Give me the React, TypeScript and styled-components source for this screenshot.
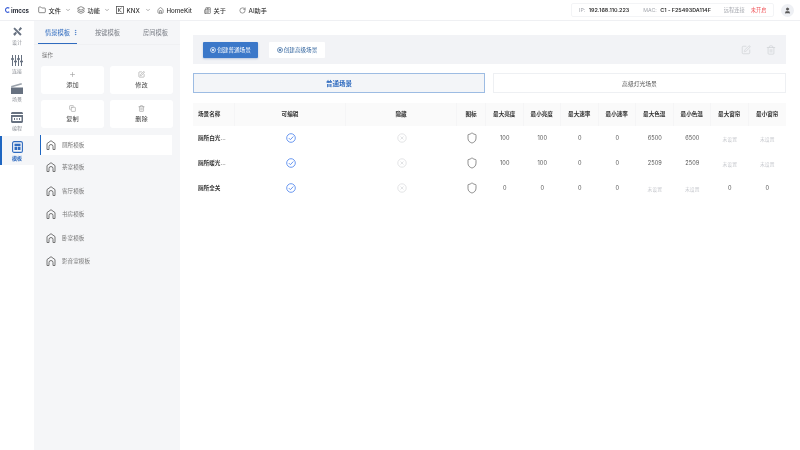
import { FunctionComponent, ReactNode } from "react"
import styled, { createGlobalStyle } from "styled-components"
import {
	ChevronDown, Copy, EllipsisVertical, Folder, Layers, Newspaper, Plus, RotateCw,
	Shield, SquarePen, Trash2, User, Home,
} from "lucide-react"

const GlobalStyle = createGlobalStyle`
	html, body {
		margin: 0;
		padding: 0;
		background: white;
		font-family: "Inter", "Noto Sans CJK SC", sans-serif;
	}
	* { box-sizing: border-box; }
`

const Page = styled.div`
	width: 800px;
	height: 450px;
	display: flex;
	flex-direction: column;
	overflow: hidden;
	will-change: opacity;
`

const Header = styled.header`
	height: 21px;
	flex-shrink: 0;
	display: flex;
	align-items: center;
	padding: 0 6px 0 5px;
	border-bottom: 1px solid #eff0f3;
	color: #333;
	font-size: 6.2px;
`

const Logo = styled.div`
	display: flex;
	align-items: center;
	width: 33px;
	font-weight: 700;
	font-size: 6.2px;
	color: #2a2f3a;
	svg { margin-right: 1px; }
`

const MenuItem = styled.div<{ $width: number }>`
	display: flex;
	align-items: center;
	gap: 2.5px;
	width: ${({ $width }) => $width}px;
	font-weight: 500;
	svg { flex-shrink: 0; color: #555; }
`

const MenuChevron = styled(ChevronDown)`
	margin-left: auto;
	margin-right: 6px;
	color: #666 !important;
`

const Status = styled.div`
	margin-left: auto;
	width: 203px;
	height: 14px;
	display: flex;
	align-items: center;
	padding: 0 7px;
	border: 1px solid #f3f4f6;
	border-radius: 2px;
	font-size: 5.25px;
	white-space: nowrap;
`

const StatusLabel = styled.span<{ $gap?: number }>`
	color: #a3a6ad;
	margin-right: 3.5px;
	margin-left: ${({ $gap }) => $gap || 0}px;
`

const StatusValue = styled.span`
	color: #333;
	font-weight: 600;
	font-size: 5.4px;
`

const StatusOff = styled.span`
	color: #f0555a;
	margin-left: 2.5px;
`

const AvatarCircle = styled.div`
	width: 13px;
	height: 13px;
	margin-left: 7px;
	border-radius: 50%;
	background: #eef0f4;
	color: #555;
	display: flex;
	align-items: center;
	justify-content: center;
`

const Body = styled.div`
	flex: 1;
	display: flex;
	min-height: 0;
`

const Nav = styled.nav`
	width: 34px;
	flex-shrink: 0;
`

const NavItem = styled.div<{ $active?: boolean }>`
	height: 28.8px;
	display: flex;
	flex-direction: column;
	align-items: center;
	justify-content: center;
	gap: 1px;
	font-size: 5px;
	color: ${({ $active }) => ($active ? "#2f6bbf" : "#8b8f96")};
	font-weight: ${({ $active }) => ($active ? 600 : 400)};
	background: ${({ $active }) => ($active ? "#f5f6f8" : "white")};
	border-left: 2px solid ${({ $active }) => ($active ? "#1f66c1" : "transparent")};
	padding-right: 2px;
	svg { color: ${({ $active }) => ($active ? "#2f6bbf" : "#677180")}; }
`

const Side = styled.aside`
	width: 146px;
	flex-shrink: 0;
	background: #f5f6f8;
	display: flex;
	flex-direction: column;
`

const SideTabs = styled.div`
	display: flex;
	height: 24px;
	padding-left: 4px;
	border-bottom: 1px solid #f0f1f3;
`

const SideTab = styled.div<{ $active?: boolean }>`
	width: ${({ $active }) => ($active ? 39 : 48)}px;
	margin-right: ${({ $active }) => ($active ? 4 : 0)}px;
	display: flex;
	align-items: center;
	justify-content: ${({ $active }) => ($active ? "flex-start" : "center")};
	padding-left: ${({ $active }) => ($active ? 7 : 5)}px;
	font-size: 6.25px;
	color: ${({ $active }) => ($active ? "#2f6bbf" : "#7b7f87")};
	border-bottom: ${({ $active }) => ($active ? "1.5px solid #2f6bbf" : "none")};
	svg { margin-left: auto; margin-right: -2px; }
`

const SideLabel = styled.div`
	font-size: 5.5px;
	color: #777;
	padding: 6px 0 0 8px;
	height: 21px;
`

const ActionGrid = styled.div`
	display: grid;
	grid-template-columns: 63px 63px;
	grid-auto-rows: 28px;
	gap: 6px;
	padding-left: 7px;
`

const ActionCard = styled.div`
	background: white;
	border-radius: 3px;
	display: flex;
	flex-direction: column;
	align-items: center;
	justify-content: center;
	gap: 2px;
	font-size: 6.2px;
	color: #444;
	svg { color: #999; }
`

const TemplateList = styled.div`
	margin-top: 7px;
	padding-left: 6px;
	display: flex;
	flex-direction: column;
`

const TemplateItem = styled.div<{ $active?: boolean }>`
	width: 132px;
	height: 23.4px;
	padding-left: 6px;
	display: flex;
	align-items: center;
	gap: 6px;
	font-size: 5.6px;
	color: #777;
	svg { color: #666; }
	${({ $active }) => $active && `
		height: 20px;
		margin-bottom: .7px;
		background: white;
		border-left: 1.5px solid #1f66c1;
		padding-left: 5px;
	`}
`

const Main = styled.main`
	flex: 1;
	padding: 14px 14px 0 13px;
	min-width: 0;
`

const Toolbar = styled.div`
	height: 29px;
	background: #f2f3f6;
	display: flex;
	align-items: center;
	padding: 0 10px;
`

const CreateButton = styled.div<{ $primary?: boolean }>`
	height: 16px;
	width: ${({ $primary }) => ($primary ? 55 : 56)}px;
	margin-right: 11px;
	display: flex;
	align-items: center;
	justify-content: center;
	gap: 1px;
	font-size: 5.6px;
	border-radius: 1px;
	background: ${({ $primary }) => ($primary ? "#3b78c9" : "white")};
	color: ${({ $primary }) => ($primary ? "white" : "#33659f")};
	box-shadow: ${({ $primary }) => ($primary ? "0 1px 2px rgba(50,100,170,.3)" : "none")};
`

const ToolIcons = styled.div`
	margin-left: auto;
	display: flex;
	gap: 15px;
	color: #d4d6da;
`

const SceneTabs = styled.div`
	margin-top: 9px;
	display: grid;
	grid-template-columns: 292px 293px;
	gap: 8px;
`

const SceneTab = styled.div<{ $active?: boolean }>`
	height: 20px;
	display: flex;
	align-items: center;
	justify-content: center;
	font-size: ${({ $active }) => ($active ? 6.5 : 5.8)}px;
	font-weight: ${({ $active }) => ($active ? 600 : 400)};
	color: ${({ $active }) => ($active ? "#2f6bbf" : "#555")};
	background: ${({ $active }) => ($active ? "#f3f5f8" : "white")};
	border: 1px solid ${({ $active }) => ($active ? "#9dbce3" : "#eef0f3")};
`

const Row = styled.div<{ $head?: boolean }>`
	display: grid;
	grid-template-columns: 42px 111px 111px 29px repeat(8, 37.5px);
	height: ${({ $head }) => ($head ? 23 : 25)}px;
	${({ $head }) => $head && "margin-top: 9.5px; background: #fafafa; font-weight: 600;"}
	font-size: 5.6px;
	color: #333;
`

const Cell = styled.div<{ $left?: boolean; $muted?: boolean; $strong?: boolean }>`
	display: flex;
	align-items: center;
	justify-content: ${({ $left }) => ($left ? "flex-start" : "center")};
	padding-left: ${({ $left }) => ($left ? 5 : 0)}px;
	color: ${({ $muted }) => ($muted ? "#c8cacf" : "inherit")};
	font-size: ${({ $muted }) => ($muted ? 4.8 : 5.6)}px;
	font-weight: ${({ $strong }) => ($strong ? 600 : "inherit")};
`

const HeadCell = styled(Cell)`
	border-right: 1px solid #f5f5f6;
	&:last-child { border-right: none; }
`

const ValueCell = styled(Cell)`
	color: ${({ $muted }) => ($muted ? "#c8cacf" : "#555")};
	font-weight: 400;
`

const DesignIcon = () => (
	<svg width="11" height="11" viewBox="0 0 12 12" fill="currentColor">
		<path d="M1.500 3 3 1.500l7.500 7.500L9 10.500z" />
		<path d="M7 4.200 9.200 1.200l1.800 1.500L8.300 5.500z" />
		<path d="M1.200 8.800 4 6.200l1.500 1.500L3 10.800z" />
	</svg>
)

const SlidersIcon = () => (
	<svg width="12" height="11" viewBox="0 0 12 11" fill="none" stroke="currentColor" strokeWidth="1">
		<path d="M1.500 0v11M4.500 0v11M7.500 0v11M10.500 0v11" />
		<path d="M0 4h3M3 6.500h3M6 4h3M9 6.500h3" strokeWidth="1.500" />
	</svg>
)

const SlateIcon = () => (
	<svg width="12" height="11" viewBox="0 0 12 11" fill="currentColor">
		<path d="M0 4.500h12V11H0z" />
		<path d="M0 3 10.500 0l.5 1.500L.5 4.500z" opacity=".65" />
	</svg>
)

const CodeIcon = () => (
	<svg width="12" height="11" viewBox="0 0 12 11" fill="currentColor">
		<path d="M0 1.500C0 .7.700 0 1.500 0h9c.8 0 1.500.7 1.500 1.500V2H0z" />
		<path fillRule="evenodd" d="M0 3h12v6.500c0 .8-.7 1.500-1.500 1.500h-9C.7 11 0 10.300 0 9.500zm1.500 2v4h9V5z" />
		<path d="M3 6h1v2H3zM5.500 6h1v2h-1zM8 6h1v2H8z" />
	</svg>
)

const TemplateIcon = () => (
	<svg width="11" height="12" viewBox="0 0 11 12" fill="none">
		<rect x=".6" y=".6" width="9.800" height="10.800" rx="1.500" stroke="currentColor" strokeWidth="1.100" />
		<rect x="2.500" y="2.700" width="6" height="2.300" fill="currentColor" />
		<rect x="2.500" y="5.700" width="2.700" height="3.300" fill="currentColor" />
		<rect x="5.800" y="5.700" width="2.700" height="3.300" fill="currentColor" />
	</svg>
)

const KnxIcon = () => (
	<svg width="8" height="8" viewBox="0 0 8 8" fill="none" stroke="currentColor" strokeWidth=".8">
		<rect x=".5" y=".5" width="7" height="7" />
		<path d="M2.500 2v4M5.500 2 2.500 4l3 2" />
	</svg>
)

const LogoMark = () => (
	<svg width="5" height="6" viewBox="0 0 5 6" fill="none" stroke="#3f62d8" strokeWidth="1.100">
		<path d="M4.300 1.200A2.300 2.300 0 1 0 4.300 4.800" />
	</svg>
)

const HouseIcon = () => (
	<svg width="10" height="10" viewBox="0 0 10 10" fill="none" stroke="currentColor" strokeWidth=".9">
		<path d="M1 9.500V3.600L5 .7l4 2.900v5.900H7" />
		<path d="M1 9.500h2V6.500a2 2 0 0 1 4 0v3" />
	</svg>
)

const CheckMark = () => (
	<svg width="10" height="10" viewBox="0 0 10 10" fill="none" stroke="#5b8dee" strokeWidth=".9">
		<circle cx="5" cy="5" r="4.300" />
		<path d="M2.800 5.100 4.400 6.700 7.300 3.500" />
	</svg>
)

const CrossMark = () => (
	<svg width="10" height="10" viewBox="0 0 10 10" fill="none" stroke="#dcdde0" strokeWidth=".8">
		<circle cx="5" cy="5" r="4.200" />
		<path d="M3.500 3.500l3 3M6.500 3.500l-3 3" />
	</svg>
)

const RingMark = () => (
	<svg width="6" height="6" viewBox="0 0 6 6" fill="none" stroke="currentColor" strokeWidth=".7">
		<circle cx="3" cy="3" r="2.500" />
		<circle cx="3" cy="3" r=".8" fill="currentColor" />
	</svg>
)

const Menu: FunctionComponent<{ width: number; icon: ReactNode; label: string; arrow?: boolean }> = ({ width, icon, label, arrow }) => (
	<MenuItem $width={width}>
		{icon}
		{label}
		{arrow && <MenuChevron size={6} />}
	</MenuItem>
)

const navItems = [
	{ label: "设计", icon: <DesignIcon /> },
	{ label: "连接", icon: <SlidersIcon /> },
	{ label: "场景", icon: <SlateIcon /> },
	{ label: "编程", icon: <CodeIcon /> },
	{ label: "模板", icon: <TemplateIcon />, active: true },
]

const actions = [
	{ label: "添加", icon: <Plus size={7} /> },
	{ label: "修改", icon: <SquarePen size={7} /> },
	{ label: "复制", icon: <Copy size={7} /> },
	{ label: "删除", icon: <Trash2 size={7} /> },
]

const templates = ["厕所模板", "茶室模板", "客厅模板", "书房模板", "卧室模板", "影音室模板"]

const columns = ["最大亮度", "最小亮度", "最大速率", "最小速率", "最大色温", "最小色温", "最大窗帘", "最小窗帘"]

const rows = [
	{ name: "厕所白光...", values: ["100", "100", "0", "0", "6500", "6500", null, null] },
	{ name: "厕所暖光...", values: ["100", "100", "0", "0", "2509", "2509", null, null] },
	{ name: "厕所全关", values: ["0", "0", "0", "0", null, null, "0", "0"] },
]

export default function App() {
	return (
		<Page>
			<GlobalStyle />
			<Header>
				<Logo><LogoMark />imccs</Logo>
				<Menu width={39} icon={<Folder size={8} />} label="文件" arrow />
				<Menu width={39} icon={<Layers size={8} />} label="功能" arrow />
				<Menu width={41} icon={<KnxIcon />} label="KNX" arrow />
				<Menu width={47} icon={<Home size={7} />} label="HomeKit" />
				<Menu width={35} icon={<Newspaper size={7} />} label="关于" />
				<Menu width={40} icon={<RotateCw size={7} />} label="AI助手" />
				<Status>
					<StatusLabel>IP:</StatusLabel>
					<StatusValue>192.168.110.223</StatusValue>
					<StatusLabel $gap={14}>MAC:</StatusLabel>
					<StatusValue>C1 - F25493DA114F</StatusValue>
					<StatusLabel $gap={13}>远程连接</StatusLabel>
					<StatusOff>未开启</StatusOff>
				</Status>
				<AvatarCircle><User size={7} fill="currentColor" /></AvatarCircle>
			</Header>
			<Body>
				<Nav>
					{navItems.map(item => (
						<NavItem key={item.label} $active={item.active}>
							{item.icon}
							{item.label}
						</NavItem>
					))}
				</Nav>
				<Side>
					<SideTabs>
						<SideTab $active>情景模板<EllipsisVertical size={7} /></SideTab>
						<SideTab>按键模板</SideTab>
						<SideTab>房间模板</SideTab>
					</SideTabs>
					<SideLabel>操作</SideLabel>
					<ActionGrid>
						{actions.map(action => (
							<ActionCard key={action.label}>
								{action.icon}
								{action.label}
							</ActionCard>
						))}
					</ActionGrid>
					<TemplateList>
						{templates.map((name, i) => (
							<TemplateItem key={name} $active={i === 0}>
								<HouseIcon />
								{name}
							</TemplateItem>
						))}
					</TemplateList>
				</Side>
				<Main>
					<Toolbar>
						<CreateButton $primary><RingMark />创建普通场景</CreateButton>
						<CreateButton><RingMark />创建高级场景</CreateButton>
						<ToolIcons>
							<SquarePen size={10} />
							<Trash2 size={10} />
						</ToolIcons>
					</Toolbar>
					<SceneTabs>
						<SceneTab $active>普通场景</SceneTab>
						<SceneTab>高级灯光场景</SceneTab>
					</SceneTabs>
					<Row $head>
						<HeadCell $left>场景名称</HeadCell>
						<HeadCell>可编辑</HeadCell>
						<HeadCell>隐藏</HeadCell>
						<HeadCell>图标</HeadCell>
						{columns.map(col => <HeadCell key={col}>{col}</HeadCell>)}
					</Row>
					{rows.map(row => (
						<Row key={row.name}>
							<Cell $left $strong>{row.name}</Cell>
							<Cell><CheckMark /></Cell>
							<Cell><CrossMark /></Cell>
							<Cell><Shield size={12} color="#555" strokeWidth={1.300} /></Cell>
							{row.values.map((v, i) => (
								<ValueCell key={i} $muted={v === null}>{v === null ? "未设置" : v}</ValueCell>
							))}
						</Row>
					))}
				</Main>
			</Body>
		</Page>
	)
}
